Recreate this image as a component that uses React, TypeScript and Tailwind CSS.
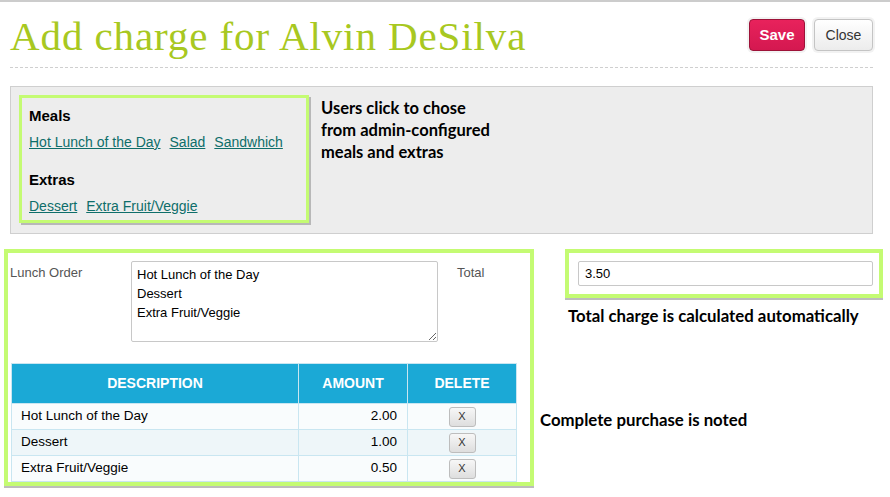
import React, { useState } from "react";

interface Charge {
  id: number;
  description: string;
  amount: number;
}

const meals = ["Hot Lunch of the Day", "Salad", "Sandwhich"];
const extras = ["Dessert", "Extra Fruit/Veggie"];

const sans = { fontFamily: '"Liberation Sans", Arial, sans-serif' };
const note = { fontFamily: 'Lato, "Open Sans", sans-serif' };

export default function App() {
  const [charges, setCharges] = useState<Charge[]>([
    { id: 1, description: "Hot Lunch of the Day", amount: 2.0 },
    { id: 2, description: "Dessert", amount: 1.0 },
    { id: 3, description: "Extra Fruit/Veggie", amount: 0.5 },
  ]);

  const total = charges.reduce((s, c) => s + c.amount, 0);

  function addCharge(description: string) {
    const amount =
      description === "Hot Lunch of the Day"
        ? 2
        : description === "Dessert"
        ? 1
        : description === "Extra Fruit/Veggie"
        ? 0.5
        : 1.5;
    setCharges((prev) => [...prev, { id: Date.now(), description, amount }]);
  }

  return (
    <div className="min-h-screen w-[890px] bg-white border-t-2 border-[#cccccc]" style={sans}>
      {/* Header */}
      <div className="ml-[10px] w-[863px] flex items-start justify-between pt-[10px]">
        <h1
          className="text-[41px] leading-[48px] text-[#a8c821] tracking-[0.9px]"
          style={{ fontFamily: '"Liberation Serif", "Times New Roman", serif' }}
        >
          Add charge for Alvin DeSilva
        </h1>

        <div className="flex gap-[5px] mt-[5px] mr-[-2px]">
          <div className="p-[2px] rounded-[6px] bg-[#f2f2f2]">
            <button className="w-[56px] h-[32px] rounded-[4px] border border-[#9d1238] bg-gradient-to-b from-[#e8225c] to-[#d41850] text-white font-bold text-[15px]">
              Save
            </button>
          </div>
          <div className="p-[2px] rounded-[6px] bg-[#f2f2f2]">
            <button className="w-[59px] h-[32px] rounded-[4px] border border-[#c4c4c4] bg-gradient-to-b from-white to-[#ececec] text-[#333] text-[14px]">
              Close
            </button>
          </div>
        </div>
      </div>

      <div className="ml-[10px] w-[863px] mt-[7px] border-t border-dashed border-[#cfcfcf]" />

      {/* Meals & extras picker */}
      <div className="ml-[10px] w-[863px] mt-[18px] bg-[#ededed] border border-[#cfcfcf] p-[8px] flex gap-[12px] h-[148px]">
        <div className="w-[290px] h-[128px] border-[3px] border-[#c4fb73] shadow-[2px_2px_0_#b8b8b8] pl-[7px] pt-[8px]">
          <div className="text-[15px] font-bold text-black leading-[20px]">Meals</div>
          <div className="flex gap-[9px] mt-[6px] text-[14px] leading-[20px]">
            {meals.map((m) => (
              <a key={m} href="#" onClick={(e) => { e.preventDefault(); addCharge(m); }} className="text-[#0e6e6a] underline">
                {m}
              </a>
            ))}
          </div>
          <div className="text-[15px] font-bold text-black leading-[20px] mt-[18px]">Extras</div>
          <div className="flex gap-[9px] mt-[6px] text-[14px] leading-[20px]">
            {extras.map((m) => (
              <a key={m} href="#" onClick={(e) => { e.preventDefault(); addCharge(m); }} className="text-[#0e6e6a] underline">
                {m}
              </a>
            ))}
          </div>
        </div>
        <p className="w-[180px] text-[16.5px] font-bold leading-[22px] text-black mt-[2px]" style={note}>
          Users click to chose from admin-configured meals and extras
        </p>
      </div>

      {/* Order + total */}
      <div className="flex mt-[15px] ml-[4px]">
        <div className="w-[530px] h-[237px] border-4 border-[#c4fb73] shadow-[0_2px_0_#bdbdbd] px-[2px] pt-[8px]">
          <div className="flex">
            <label className="w-[121px] text-[13px] text-[#555] leading-[20px] pt-[2px]">Lunch Order</label>
            <textarea
              readOnly
              value={charges.map((c) => c.description).join("\n")}
              className="w-[307px] h-[81px] border border-[#c8c8c8] rounded-[2px] px-[5px] pt-[3px] text-[13px] leading-[19px] text-black resize-y"
            />
            <label className="ml-[19px] text-[13px] text-[#555] leading-[20px] pt-[2px]">Total</label>
          </div>

          <table className="mt-[21px] ml-[1px] w-[506px] border-collapse text-[13.5px]">
            <thead>
              <tr className="bg-[#1ba9d6] text-white h-[40px] text-[14px] font-bold">
                <th className="border border-[#c9e6f1] font-bold">DESCRIPTION</th>
                <th className="w-[109px] border border-[#c9e6f1] font-bold">AMOUNT</th>
                <th className="w-[109px] border border-[#c9e6f1] font-bold">DELETE</th>
              </tr>
            </thead>
            <tbody>
              {charges.map((c, i) => (
                <tr key={c.id} className={i % 2 === 1 ? "bg-[#eef6f9] h-[26px]" : "bg-[#f9fcfd] h-[26px]"}>
                  <td className="border border-[#c9e6f1] pl-[9px] text-black">{c.description}</td>
                  <td className="border border-[#c9e6f1] pr-[10px] text-right text-black">{c.amount.toFixed(2)}</td>
                  <td className="border border-[#c9e6f1] text-center">
                    <button
                      onClick={() => setCharges((prev) => prev.filter((p) => p.id !== c.id))}
                      className="w-[27px] h-[20px] rounded-[3px] border border-[#bdbdbd] bg-gradient-to-b from-[#f7f7f7] to-[#dedede] text-[11px] text-[#333] leading-none align-middle"
                    >
                      X
                    </button>
                  </td>
                </tr>
              ))}
            </tbody>
          </table>
        </div>

        <div className="ml-[6px] flex flex-col">
          <div className="ml-[25px] w-[318px] h-[49px] border-4 border-[#c4fb73] shadow-[0_2px_0_#bdbdbd] pl-[9px] pt-[8px]">
            <input
              readOnly
              value={total.toFixed(2)}
              className="w-[295px] h-[25px] border border-[#c8c8c8] rounded-[2px] px-[6px] text-[13px] text-black"
            />
          </div>
          <p className="ml-[28px] mt-[8px] text-[16.8px] font-bold text-black leading-[20px]" style={note}>
            Total charge is calculated automatically
          </p>
          <p className="mt-[84px] text-[16.8px] font-bold text-black leading-[20px]" style={note}>
            Complete purchase is noted
          </p>
        </div>
      </div>
    </div>
  );
}
